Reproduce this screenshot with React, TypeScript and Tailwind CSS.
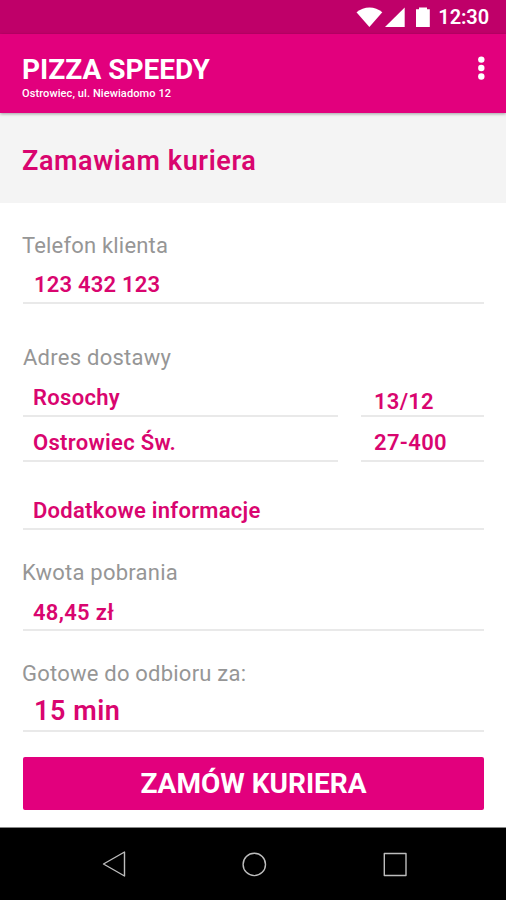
import type { ReactNode } from "react";

function Label({ children, className = "" }: { children: ReactNode; className?: string }) {
  return (
    <div className={`whitespace-nowrap text-[22px] leading-[26px] text-[#969696] ${className}`}>{children}</div>
  );
}

function Value({ children, className = "" }: { children: ReactNode; className?: string }) {
  return (
    <div className={`flex flex-col justify-end whitespace-nowrap border-b-2 border-[#e9e9e9] font-semibold leading-[26px] text-[#d9056f] ${className}`}>
      <span>{children}</span>
    </div>
  );
}

export default function App() {
  return (
    <div className="flex h-[900px] w-[506px] flex-col overflow-hidden bg-white font-[Roboto,sans-serif]">
      <div className="flex h-[34px] shrink-0 items-center justify-end bg-[#bf0069] pr-[17px] text-white">
        <svg className="h-[34px] w-[78px]" viewBox="353 0 78 34" fill="white">
          <path d="M356.5 12.2C364 5.8 375 5.8 382.3 12.2L369.4 27Z" />
          <path d="M385 27H404.7V7.5Z" />
          <path d="M416 9.2H419V7.5H427V9.2H429.8V27H416Z" />
        </svg>
        <span className="ml-[7px] text-[20px] font-semibold leading-[34px] tracking-[-0.1px]">12:30</span>
      </div>
      <header className="z-10 flex h-[79px] shrink-0 items-start justify-between bg-[#e2007d] pl-[22px] pr-[21px] text-white shadow-[0_1px_3px_rgba(0,0,0,0.35)]">
        <div className="whitespace-nowrap pt-[20px]">
          <h1 className="text-[28px] font-bold leading-[31px]">PIZZA SPEEDY</h1>
          <p className="pt-px text-[11px] font-medium leading-[15px] tracking-[0.1px]">Ostrowiec, ul. Niewiadomo 12</p>
        </div>
        <svg className="mt-[22px] h-[24px] w-[8px]" viewBox="0 0 8 24" fill="white">
          <circle cx="4.3" cy="3.6" r="3.2" />
          <circle cx="4.3" cy="12" r="3.2" />
          <circle cx="4.3" cy="20.5" r="3.2" />
        </svg>
      </header>
      <div className="flex h-[90px] shrink-0 items-center bg-[#f4f4f4] px-[22px] pt-[6px]">
        <h2 className="text-[27px] font-semibold leading-[30px] tracking-[0.6px] text-[#d9056f]">Zamawiam kuriera</h2>
      </div>
      <main className="flex h-[624px] shrink-0 flex-col pl-[23px] pr-[22px]">
        <Label className="mt-[30px] -ml-px tracking-[0.18px]">Telefon klienta</Label>
        <Value className="h-[45px] pb-[4px] pl-[11px] text-[22px] tracking-[0.2px]">123 432 123</Value>
        <Label className="mt-[41px] tracking-[0.25px]">Adres dostawy</Label>
        <div className="grid grid-cols-[315px_123px] gap-x-[23px]">
          <Value className="h-[46px] pb-[4px] pl-[10px] text-[22px] tracking-[0.3px]">Rosochy</Value>
          <Value className="h-[46px] pl-[13px] text-[22px] tracking-[0.25px]">13/12</Value>
          <Value className="h-[45px] pb-[4px] pl-[10px] text-[22px] tracking-[0.3px]">Ostrowiec Św.</Value>
          <Value className="h-[45px] pb-[4px] pl-[13px] text-[22px] tracking-[0.35px]">27-400</Value>
        </div>
        <Value className="h-[68px] pb-[4px] pl-[10px] text-[22px] tracking-[0.28px]">Dodatkowe informacje</Value>
        <Label className="mt-[30px] -ml-px tracking-[0.25px]">Kwota pobrania</Label>
        <Value className="h-[45px] pb-[3px] pl-[10px] text-[22px] tracking-[0.3px]">48,45 zł</Value>
        <Label className="mt-[30px] -ml-px tracking-[0.22px]">Gotowe do odbioru za:</Label>
        <Value className="h-[45px] pb-[6px] pl-[11px] text-[27px] tracking-[0.55px]">15 min</Value>
        <button className="mt-[25px] h-[53px] shrink-0 rounded-[2px] bg-[#e2007d] text-[28px] font-bold leading-[53px] text-white">
          ZAMÓW KURIERA
        </button>
      </main>
      <nav className="h-[73px] shrink-0 border-t border-[#888] bg-black">
        <svg className="h-[72px] w-[506px]" viewBox="0 828 506 72" fill="none" stroke="#bdbdbd" strokeWidth="1.4" strokeLinejoin="round">
          <path d="M103.5 864L124.5 852V876Z" />
          <circle cx="254.3" cy="864.4" r="11.2" />
          <path d="M384.3 853.5H406V875.5H384.3Z" />
        </svg>
      </nav>
    </div>
  );
}
